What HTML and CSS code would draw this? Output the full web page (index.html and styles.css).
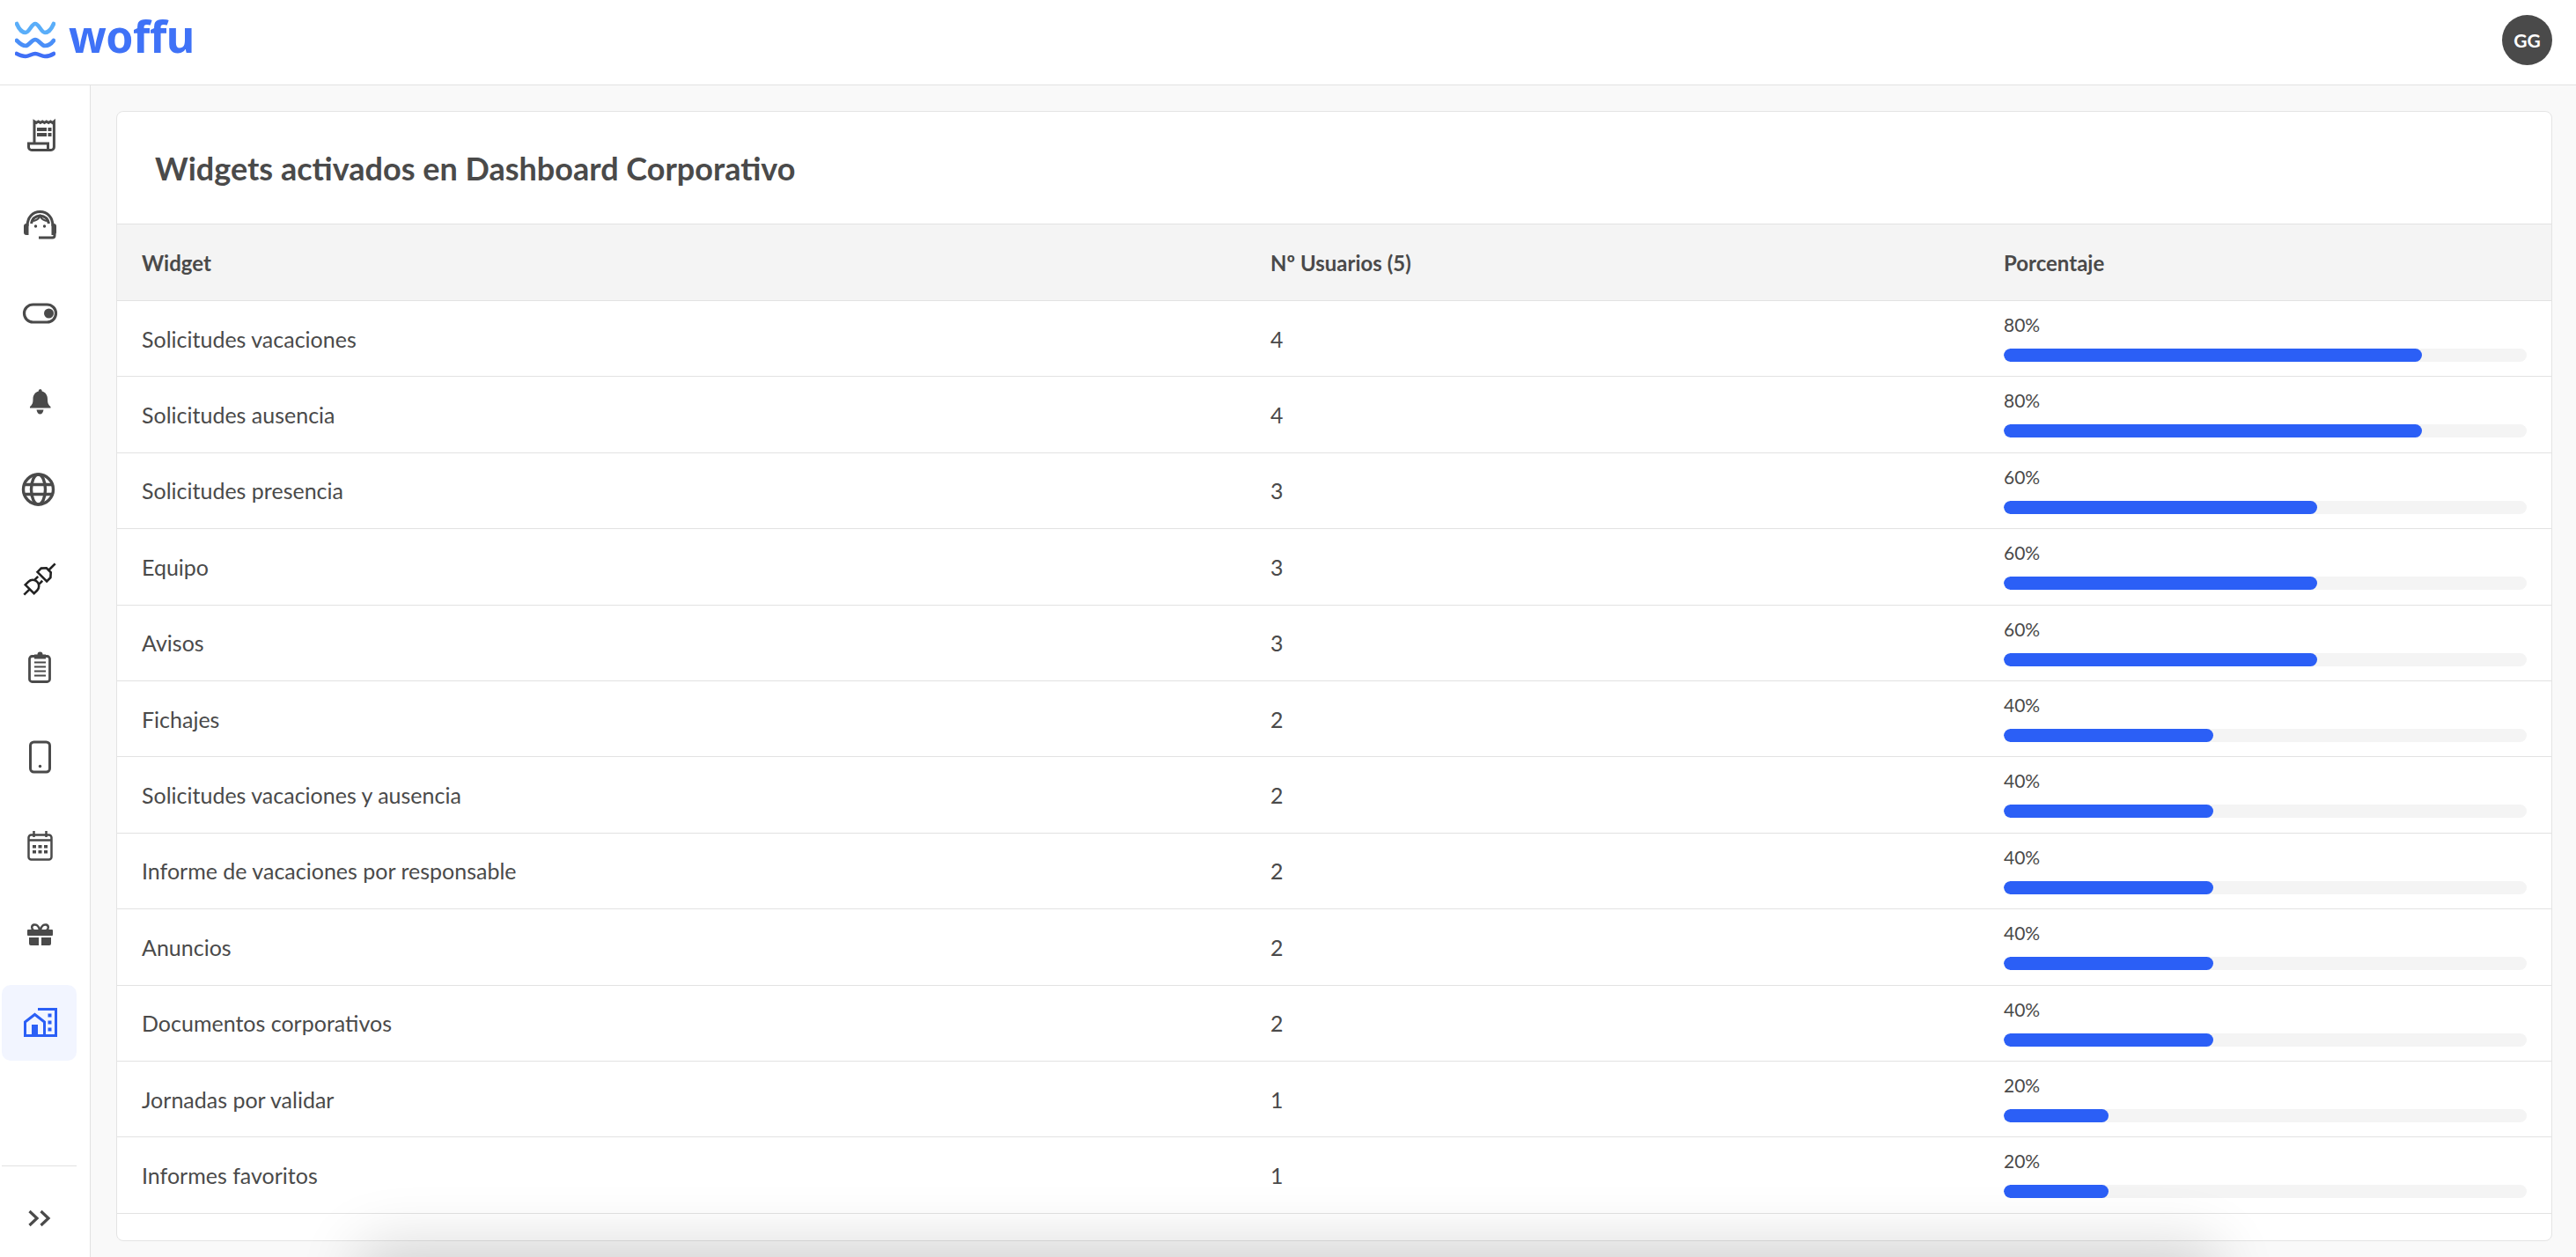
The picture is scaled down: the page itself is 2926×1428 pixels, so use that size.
FILE: index.html
```html
<!DOCTYPE html>
<html lang="es">
<head>
<meta charset="utf-8">
<title>Woffu - Widgets activados</title>
<link rel="stylesheet" href="styles.css">
</head>
<body>
<div class="app">
  <header class="topbar">
    <a class="logo">
      <svg class="logo-mark" width="46" height="46" viewBox="17 24 46 46" fill="none" stroke-width="4.6" stroke-linecap="round">
        <path stroke="#5aaef9" d="M19 29C22 36 25 39 29 39C33 39 36 29 40 29C44 29 47 39 51 39C55 39 58 36 61 29"/>
        <path stroke="#4a8ff8" d="M19 48C23 52 26 54 29 54C33 54 36 47 40 47C44 47 47 54 51 54C55 54 58 52 61 48"/>
        <path stroke="#3f6ff6" d="M19 63C23 65 26 66 29 66C33 66 36 63 40 63C44 63 47 66 51 66C55 66 58 65 61 63"/>
      </svg>
      <span class="logo-text">woffu</span>
    </a>
    <div class="avatar">GG</div>
  </header>
  <div class="body">
    <aside class="sidebar">
      <nav class="nav">
        <a class="nav-item"><svg class="icon" viewBox="0 0 48 48" fill="none" stroke="#4a4a4a" stroke-width="3"><path d="M18 32V8l2.300 1.500 2.300-1.500 2.300 1.500 2.300-1.500 2.300 1.500 2.300-1.500 2.300 1.500 2.300-1.500 2.300 1.500 1.700-1.500V37a3.500 3.500 0 0 1-3.500 3.500H15A3.500 3.500 0 0 1 11.500 37V33H33.500V40"/><path fill="#4a4a4a" stroke="none" d="M21 15h11v4H21zM21 21h11v4H21zM33.500 15h4v4h-4zM33.500 21h4v4h-4z"/></svg></a>
        <a class="nav-item"><svg class="icon" viewBox="0 0 48 48" fill="none" stroke="#4a4a4a" stroke-width="3"><path d="M10 26C10 16 16 9.500 24.500 9.500S39 16 39 26"/><path d="M14.500 23C15.500 17.500 19.500 14.500 24.500 14C29.500 14.500 33.500 17.500 34.500 23"/><path stroke-width="2" d="M15 20C19.500 20 23 17.500 24.500 14.500C26 17.500 29.500 20 34 20"/><path fill="#4a4a4a" stroke="none" d="M6 26a3 3 0 0 1 3-3h2.500v13H9a3 3 0 0 1-3-3zM43 26a3 3 0 0 0-3-3h-2.500v13H40a3 3 0 0 0 3-3z"/><path d="M41 35v1.500a2.500 2.500 0 0 1-2.500 2.500H23"/><circle cx="19.500" cy="26" r="1.700" fill="#4a4a4a" stroke="none"/><circle cx="29.500" cy="26" r="1.700" fill="#4a4a4a" stroke="none"/></svg></a>
        <a class="nav-item"><svg class="icon" viewBox="0 0 48 48" fill="none" stroke="#4a4a4a" stroke-width="3.200"><rect x="6.500" y="14" width="36" height="20" rx="10"/><circle cx="34.500" cy="24" r="5.500" fill="#4a4a4a" stroke="none"/></svg></a>
        <a class="nav-item"><svg class="icon" viewBox="0 0 48 48" fill="#4a4a4a"><path d="M24.500 10c1.500 0 2.200 1 2.200 2.500 4 1 6.300 4.500 6.300 9 0 4.500 1 6.500 3.500 8.500v1.500H13V30c2.500-2 3.500-4 3.500-8.500 0-4.500 2.300-8 6.300-9 0-1.500.7-2.500 2.200-2.500z"/><path d="M20.500 33.500h8c-.5 3-2 5-4 5s-3.500-2-4-5z"/></svg></a>
        <a class="nav-item"><svg class="icon" viewBox="0 0 48 48" fill="none" stroke="#4a4a4a" stroke-width="3.400"><circle cx="22.500" cy="23" r="17"/><ellipse cx="22.500" cy="23" rx="8" ry="17"/><path d="M6 17.500h33M6 28.500h33"/></svg></a>
        <a class="nav-item"><svg class="icon" viewBox="0 0 48 48" fill="none" stroke="#222" stroke-width="2.600"><g transform="rotate(-45 24 24)"><path d="M-1 24H8M8 17H13A7 7 0 0 1 13 31H8ZM20 20.500H25M20 27.500H25"/><path d="M28 16.500H34L38.500 20.500V27.500L34 31.500H28ZM38.500 24H49"/></g></svg></a>
        <a class="nav-item"><svg class="icon" viewBox="0 0 48 48" fill="none" stroke="#4a4a4a" stroke-width="2.800"><rect x="12.500" y="10.500" width="23" height="29" rx="3"/><path fill="#4a4a4a" stroke="none" d="M18 8.500h3.500a3 3 0 0 1 6 0H31v5H18z"/><path stroke-width="2" d="M18 17.500h13M18 22.500h13M18 27.500h13M18 32.500h13"/></svg></a>
        <a class="nav-item"><svg class="icon" viewBox="0 0 48 48" fill="none" stroke="#4a4a4a" stroke-width="3"><rect x="13.500" y="7" width="22" height="34" rx="4"/><circle cx="24.500" cy="34.500" r="1.700" fill="#4a4a4a" stroke="none"/></svg></a>
        <a class="nav-item"><svg class="icon" viewBox="0 0 48 48" fill="none" stroke="#4a4a4a" stroke-width="2.500"><rect x="11.500" y="12.500" width="26" height="28" rx="3"/><path d="M11.500 18.500h26M17.500 8v7M31.500 8v7"/><path fill="#4a4a4a" stroke="none" d="M16 24h4v3.500h-4zM22.500 24h4v3.500h-4zM29 24h4v3.500h-4zM16 30h4v3.500h-4zM22.500 30h4v3.500h-4zM29 30h4v3.500h-4z"/></svg></a>
        <a class="nav-item"><svg class="icon" viewBox="0 0 48 48" fill="#4a4a4a"><path fill="none" stroke="#4a4a4a" stroke-width="2.500" d="M24 19.500C23 14.500 20 13 17.500 13.500 14.500 14.500 14.500 18 17 19.500M25 19.500C26 14.500 29 13 31.500 13.500 34.500 14.500 34.500 18 32 19.500"/><rect x="10" y="19" width="29" height="7" rx="1"/><path d="M12 28h11v9H14a2 2 0 0 1-2-2zM26 28h11v7a2 2 0 0 1-2 2h-9z"/></svg></a>
        <a class="nav-item nav-item-active"><svg class="icon" viewBox="0 0 48 48" fill="none" stroke="#2b5ff6" stroke-width="3"><path d="M7.500 38.500V23L18.500 14.500L29.500 23V38.500Z"/><path fill="#2b5ff6" stroke="none" d="M15 26h7v13h-7z"/><path d="M22 8.500H42.500V38.500H30"/><path fill="#2b5ff6" stroke="none" d="M33.500 13.500h4v4h-4zM33.500 21.500h4v4h-4zM33.500 29.500h4v4h-4z"/></svg></a>
      </nav>
      <div class="sidebar-foot">
        <svg class="chevrons" width="26" height="20" viewBox="0 0 26 20" fill="none" stroke="#4a4a4a" stroke-width="3.200"><path d="M1.500 2l8.500 8-8.500 8M14.500 2l8.500 8-8.500 8"/></svg>
      </div>
    </aside>
    <main class="main">
      <section class="card">
        <h1 class="card-title">Widgets activados en Dashboard Corporativo</h1>
        <div class="row row-head">
          <div class="cell">Widget</div>
          <div class="cell">Nº Usuarios (5)</div>
          <div class="cell">Porcentaje</div>
        </div>
        <div class="row"><div class="cell">Solicitudes vacaciones</div><div class="cell">4</div><div class="cell-pct"><span class="pct">80%</span><div class="bar"><div class="fill" style="width:80%"></div></div></div></div>
        <div class="row"><div class="cell">Solicitudes ausencia</div><div class="cell">4</div><div class="cell-pct"><span class="pct">80%</span><div class="bar"><div class="fill" style="width:80%"></div></div></div></div>
        <div class="row"><div class="cell">Solicitudes presencia</div><div class="cell">3</div><div class="cell-pct"><span class="pct">60%</span><div class="bar"><div class="fill" style="width:60%"></div></div></div></div>
        <div class="row"><div class="cell">Equipo</div><div class="cell">3</div><div class="cell-pct"><span class="pct">60%</span><div class="bar"><div class="fill" style="width:60%"></div></div></div></div>
        <div class="row"><div class="cell">Avisos</div><div class="cell">3</div><div class="cell-pct"><span class="pct">60%</span><div class="bar"><div class="fill" style="width:60%"></div></div></div></div>
        <div class="row"><div class="cell">Fichajes</div><div class="cell">2</div><div class="cell-pct"><span class="pct">40%</span><div class="bar"><div class="fill" style="width:40%"></div></div></div></div>
        <div class="row"><div class="cell">Solicitudes vacaciones y ausencia</div><div class="cell">2</div><div class="cell-pct"><span class="pct">40%</span><div class="bar"><div class="fill" style="width:40%"></div></div></div></div>
        <div class="row"><div class="cell">Informe de vacaciones por responsable</div><div class="cell">2</div><div class="cell-pct"><span class="pct">40%</span><div class="bar"><div class="fill" style="width:40%"></div></div></div></div>
        <div class="row"><div class="cell">Anuncios</div><div class="cell">2</div><div class="cell-pct"><span class="pct">40%</span><div class="bar"><div class="fill" style="width:40%"></div></div></div></div>
        <div class="row"><div class="cell">Documentos corporativos</div><div class="cell">2</div><div class="cell-pct"><span class="pct">40%</span><div class="bar"><div class="fill" style="width:40%"></div></div></div></div>
        <div class="row"><div class="cell">Jornadas por validar</div><div class="cell">1</div><div class="cell-pct"><span class="pct">20%</span><div class="bar"><div class="fill" style="width:20%"></div></div></div></div>
        <div class="row"><div class="cell">Informes favoritos</div><div class="cell">1</div><div class="cell-pct"><span class="pct">20%</span><div class="bar"><div class="fill" style="width:20%"></div></div></div></div>
      </section>
    </main>
  </div>
  <div class="bottom-shadow"></div>
</div>
</body>
</html>
```
FILE: styles.css
```css
* { box-sizing: border-box; }
html, body { margin: 0; height: 100%; }
body {
  font-family: "Lato", "Noto Sans", sans-serif;
  color: #4a4a4a;
  background: #f9f9f9;
  overflow: hidden;
}
.app { position: relative; height: 1428px; overflow: hidden; display: flex; flex-direction: column; }

.topbar {
  height: 97px;
  flex: none;
  background: #fff;
  border-bottom: 1px solid #e2e2e2;
  display: flex;
  align-items: center;
  justify-content: space-between;
  padding: 0 27px 6px 17px;
}
.logo { display: flex; align-items: center; gap: 15px; }
.logo-mark { display: block; }
.logo-text {
  font-family: "Noto Sans", sans-serif;
  font-weight: 700;
  font-size: 50px;
  line-height: 46px;
  color: #3f72f7;
  letter-spacing: -0.5px;
  position: relative;
  top: -4px;
}
.avatar {
  width: 57px;
  height: 57px;
  border-radius: 50%;
  background: #4a4a4a;
  color: #fff;
  font-size: 21px;
  font-weight: 700;
  display: flex;
  align-items: center;
  justify-content: center;
}

.body { flex: 1; display: flex; min-height: 0; }
.sidebar {
  width: 103px;
  flex: none;
  background: #fff;
  border-right: 1px solid #e2e2e2;
  display: flex;
  flex-direction: column;
  padding: 14px 0 0 2px;
}
.nav { display: flex; flex-direction: column; gap: 14.8px; flex: 1; }
.nav-item {
  width: 85px;
  height: 86px;
  flex: none;
  display: flex;
  align-items: center;
  padding-left: 19px;
  border-radius: 10px;
}
.nav-item-active { background: #f2f5ff; }
.icon { width: 48px; height: 48px; display: block; flex: none; }
.sidebar-foot {
  width: 85px;
  height: 104px;
  flex: none;
  border-top: 1px solid #e2e2e2;
  display: flex;
  padding: 49px 0 0 30px;
}
.chevrons { display: block; }

.main { flex: 1; min-width: 0; padding: 29px 27px 18px 29px; }
.card {
  height: 100%;
  background: #fff;
  border: 1px solid #e4e4e4;
  border-radius: 8px;
  overflow: hidden;
}
.card-title {
  margin: 0;
  height: 128px;
  padding: 0 0 0 43px;
  display: flex;
  align-items: center;
  font-size: 36px;
  font-weight: 700;
  color: #4a4a4a;
  border-bottom: 1px solid #e2e2e2;
}
.row {
  display: grid;
  grid-template-columns: 1282px 833px 1fr;
  height: 86.4px;
  border-bottom: 1px solid #e2e2e2;
  font-size: 25px;
}
.row-head {
  background: #f4f4f4;
  height: 87px;
  font-weight: 700;
  font-size: 24px;
}
.cell { display: flex; align-items: center; padding: 0 28px; min-width: 0; }
.cell-pct { padding: 14px 28px 0; }
.pct { display: block; font-size: 21px; line-height: 25px; margin-bottom: 15px; }
.bar { height: 15px; border-radius: 8px; background: #f4f4f4; overflow: hidden; }
.fill { height: 100%; border-radius: 8px; background: #2b5ff6; }

.bottom-shadow {
  position: absolute;
  left: 440px;
  right: 440px;
  top: 1445px;
  height: 60px;
  box-shadow: 0 0 70px 30px rgba(0, 0, 0, 0.16);
}
```
